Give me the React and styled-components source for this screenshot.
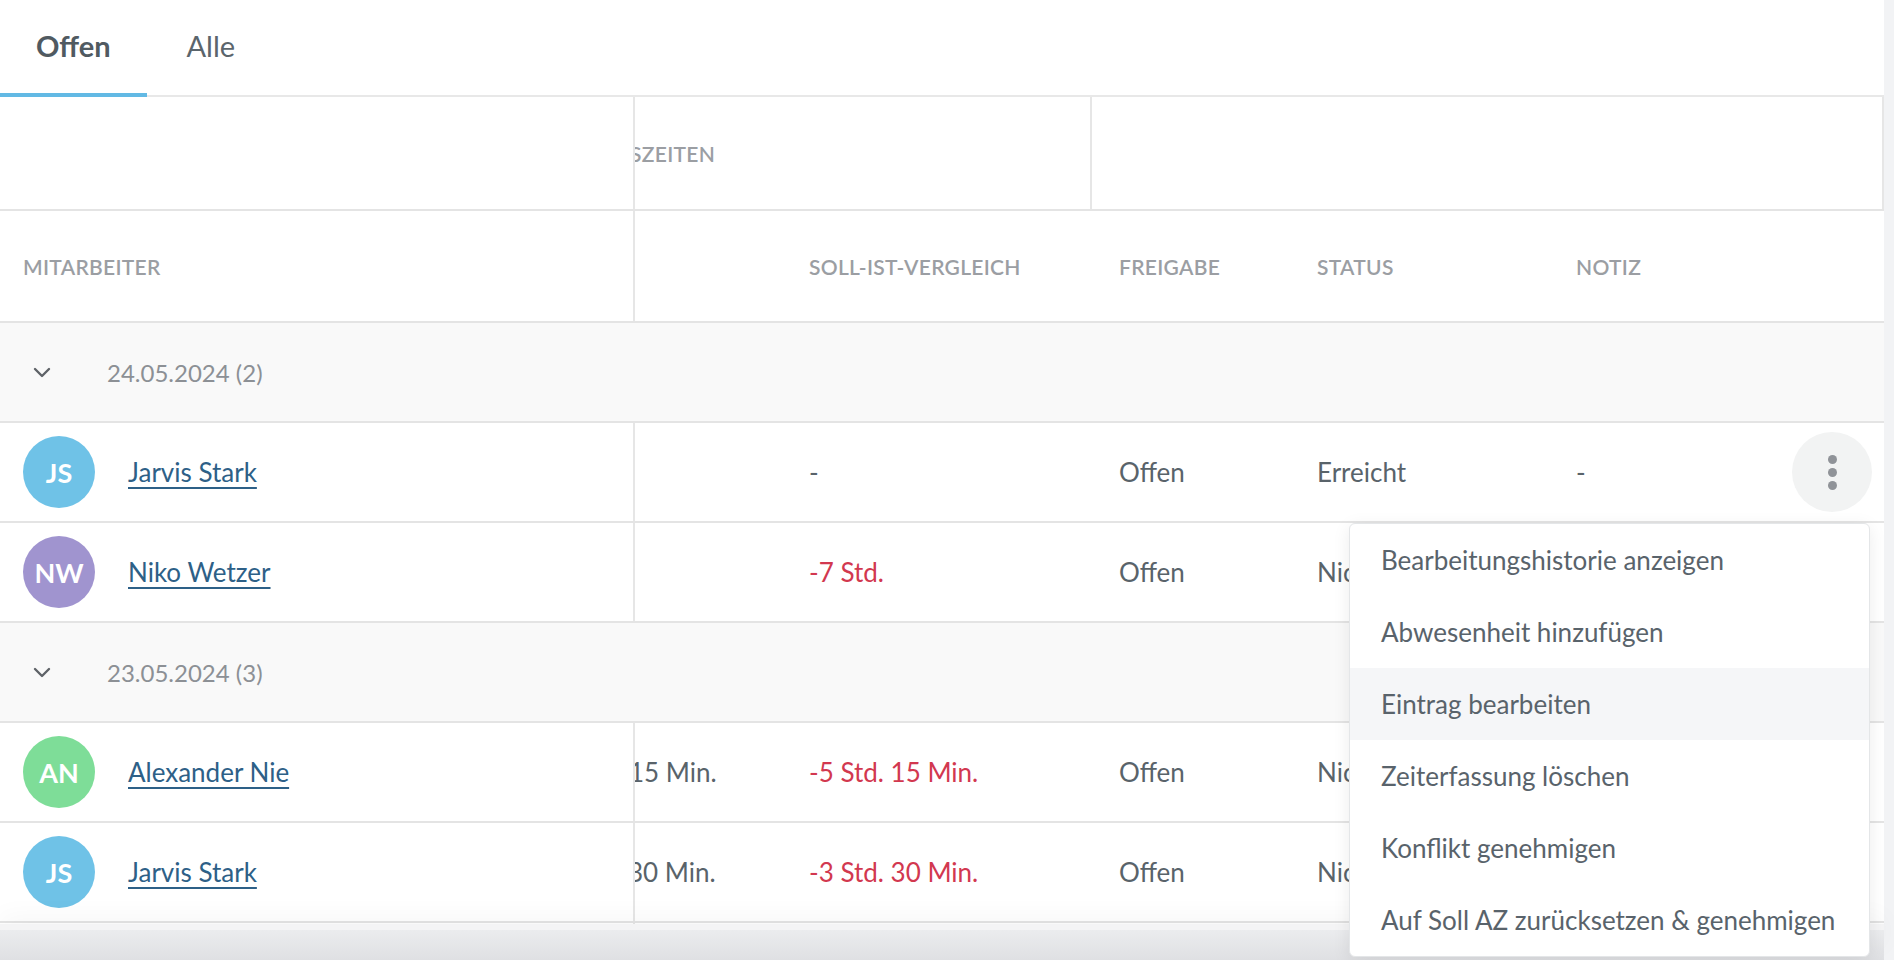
import React from 'react';
import styled, { createGlobalStyle, css } from 'styled-components';

const GlobalStyle = createGlobalStyle`
  html, body {
    margin: 0;
    padding: 0;
    height: 100%;
  }
  body {
    font-family: Lato, "Noto Sans", sans-serif;
    background: #ffffff;
    color: #59636a;
    overflow: hidden;
  }
  * {
    box-sizing: border-box;
  }
`;

const rows = [
  {
    date: '24.05.2024',
    entries: [
      { initials: 'JS', name: 'Jarvis Stark', color: '#6fc2e7', ist: '', diff: '-', negative: false, release: 'Offen', status: 'Erreicht', note: '-', hovered: true },
      { initials: 'NW', name: 'Niko Wetzer', color: '#a094cf', ist: '', diff: '-7 Std.', negative: true, release: 'Offen', status: 'Nicht erreicht', note: '-' },
    ],
  },
  {
    date: '23.05.2024',
    count: 3,
    entries: [
      { initials: 'AN', name: 'Alexander Nie', color: '#7edd98', ist: '15 Min.', shift: 6, diff: '-5 Std. 15 Min.', negative: true, release: 'Offen', status: 'Nicht erreicht', note: '-' },
      { initials: 'JS', name: 'Jarvis Stark', color: '#6fc2e7', ist: '30 Min.', shift: 7, diff: '-3 Std. 30 Min.', negative: true, release: 'Offen', status: 'Nicht erreicht', note: '-' },
      { initials: 'NW', name: 'Niko Wetzer', color: '#a094cf', ist: '45 Min.', shift: 7, diff: '-6 Std. 45 Min.', negative: true, release: 'Offen', status: 'Nicht erreicht', note: '-' },
    ],
  },
];

const menuItems = [
  'Bearbeitungshistorie anzeigen',
  'Abwesenheit hinzufügen',
  'Eintrag bearbeiten',
  'Zeiterfassung löschen',
  'Konflikt genehmigen',
  'Auf Soll AZ zurücksetzen & genehmigen',
];

// column widths of the horizontally scrolled part
const COL = { ist: 174, soll: 310, release: 198, status: 259, actions: 92, timesGroup: 455 };

const Chevron = () => (
  <svg width="18" height="11" viewBox="0 0 18 11" fill="none">
    <polyline points="2,2 9,9 16,2" stroke="#5f6368" strokeWidth="2.4" strokeLinecap="round" strokeLinejoin="round" />
  </svg>
);

const App = () => {
  return (
    <Page>
      <GlobalStyle />
      <Main>
        <TabBar>
          <Tab $active>Offen</Tab>
          <Tab>Alle</Tab>
        </TabBar>

        <Viewport>
          <Row $h={114}>
            <StickyCell />
            <Scroller>
              <GroupHead $w={COL.timesGroup}>
                <HeadLabel>
                  <Clip $shift={5}>SZEITEN</Clip>
                </HeadLabel>
              </GroupHead>
              <GroupHead $last />
            </Scroller>
          </Row>

          <Row $h={112}>
            <StickyCell>
              <HeadLabel>Mitarbeiter</HeadLabel>
            </StickyCell>
            <Scroller>
              <Cell $w={COL.ist} />
              <Cell $w={COL.soll}><HeadLabel>Soll-Ist-Vergleich</HeadLabel></Cell>
              <Cell $w={COL.release}><HeadLabel>Freigabe</HeadLabel></Cell>
              <Cell $w={COL.status}><HeadLabel>Status</HeadLabel></Cell>
              <Cell $grow><HeadLabel>Notiz</HeadLabel></Cell>
            </Scroller>
          </Row>

          {rows.map((group) => (
            <React.Fragment key={group.date}>
              <Row $h={100} $group>
                <GroupLabel>
                  <Chevron />
                  <DateText>
                    {group.date} ({group.count || group.entries.length})
                  </DateText>
                </GroupLabel>
              </Row>
              {group.entries.map((e, i) => (
                <Row $h={100} key={group.date + i}>
                  <StickyCell>
                    <Avatar $color={e.color}>{e.initials}</Avatar>
                    <NameLink href="#">{e.name}</NameLink>
                  </StickyCell>
                  <Scroller>
                    <Cell $w={COL.ist}>{e.ist && <Clip $shift={e.shift}>{e.ist}</Clip>}</Cell>
                    <Cell $w={COL.soll} $red={e.negative}>{e.diff}</Cell>
                    <Cell $w={COL.release}>{e.release}</Cell>
                    <Cell $w={COL.status}>{e.status}</Cell>
                    <Cell $grow>{e.note}</Cell>
                    <ActionCell>
                      {e.hovered && (
                        <Kebab aria-label="Aktionen">
                          <Dot />
                          <Dot />
                          <Dot />
                        </Kebab>
                      )}
                    </ActionCell>
                  </Scroller>
                </Row>
              ))}
            </React.Fragment>
          ))}
        </Viewport>

        <HScrollbar />
      </Main>
      <VScrollbar />

      <Menu>
        {menuItems.map((item) => (
          <MenuItem key={item} $active={item === 'Eintrag bearbeiten'}>
            {item}
          </MenuItem>
        ))}
      </Menu>
    </Page>
  );
};

const Page = styled.div`
  position: relative;
  display: flex;
  height: 100vh;
  overflow: hidden;
`;

const Main = styled.div`
  flex: 1;
  min-width: 0;
  display: flex;
  flex-direction: column;
`;

const VScrollbar = styled.div`
  width: 10px;
  flex-shrink: 0;
  background: #f2f3f5;
`;

const HScrollbar = styled.div`
  position: relative;
  height: 30px;
  flex-shrink: 0;
  background: linear-gradient(#ebecee, #dfe0e3);
  box-shadow: 0 -6px 0 #f4f4f5, 0 -14px 26px rgba(0, 0, 0, 0.035);
`;

const TabBar = styled.nav`
  display: flex;
  gap: 4px;
  height: 97px;
  flex-shrink: 0;
  border-bottom: 2px solid #e8e8e8;
`;

const Tab = styled.button`
  position: relative;
  padding: 0 36px 5px;
  border: 0;
  background: none;
  font-family: inherit;
  font-size: 29px;
  font-weight: ${(p) => (p.$active ? 700 : 400)};
  color: ${(p) => (p.$active ? '#505a61' : '#5b656c')};
  cursor: pointer;

  ${(p) =>
    p.$active &&
    css`
      &::after {
        content: '';
        position: absolute;
        left: 0;
        right: 0;
        bottom: -2px;
        height: 4px;
        background: #62b9e4;
      }
    `}
`;

const Viewport = styled.div`
  flex: 1;
  min-height: 0;
  overflow: hidden;
`;

const Row = styled.div`
  display: flex;
  height: ${(p) => p.$h}px;
  border-bottom: 2px solid #e4e4e4;
  background: ${(p) => (p.$group ? '#f9f9f9' : '#ffffff')};
`;

const StickyCell = styled.div`
  width: 635px;
  flex-shrink: 0;
  display: flex;
  align-items: center;
  gap: 33px;
  padding-left: 23px;
  border-right: 2px solid #e6e6e6;
`;

const Scroller = styled.div`
  flex: 1;
  min-width: 0;
  display: flex;
  overflow: hidden;
`;

const GroupHead = styled.div`
  display: flex;
  align-items: center;
  overflow: hidden;
  white-space: nowrap;
  ${(p) =>
    p.$last
      ? css`
          flex: 1;
          border-left: 2px solid #e6e6e6;
          border-right: 2px solid #e6e6e6;
        `
      : css`
          width: ${p.$w}px;
          flex-shrink: 0;
        `}
`;

const Cell = styled.div`
  display: flex;
  align-items: center;
  overflow: hidden;
  white-space: nowrap;
  font-size: 26px;
  color: ${(p) => (p.$red ? '#d2384f' : '#59636a')};
  ${(p) =>
    p.$grow
      ? css`
          flex: 1;
          min-width: 0;
        `
      : css`
          width: ${p.$w}px;
          flex-shrink: 0;
        `}
`;

const Clip = styled.span`
  margin-left: -${(p) => p.$shift || 0}px;
`;

const HeadLabel = styled.span`
  font-size: 21px;
  font-weight: 600;
  letter-spacing: 0.3px;
  text-transform: uppercase;
  color: #9b9ea3;
`;

const GroupLabel = styled.div`
  display: flex;
  align-items: center;
  gap: 56px;
  padding-left: 33px;
`;

const DateText = styled.span`
  font-size: 24px;
  color: #8c9095;
`;

const Avatar = styled.div`
  width: 72px;
  height: 72px;
  flex-shrink: 0;
  border-radius: 50%;
  display: flex;
  align-items: center;
  justify-content: center;
  background: ${(p) => p.$color};
  color: #ffffff;
  font-size: 27px;
  font-weight: 700;
`;

const NameLink = styled.a`
  font-size: 26px;
  color: #2d6087;
  text-decoration: underline;
  text-decoration-thickness: 2px;
  text-underline-offset: 5px;
`;

const ActionCell = styled.div`
  width: ${COL.actions}px;
  flex-shrink: 0;
  display: flex;
  align-items: center;
  padding-right: 12px;
`;

const Kebab = styled.button`
  width: 80px;
  height: 80px;
  border: 0;
  border-radius: 50%;
  background: #f2f3f3;
  display: flex;
  flex-direction: column;
  align-items: center;
  justify-content: center;
  gap: 4px;
  padding: 0;
  cursor: pointer;
`;

const Dot = styled.span`
  width: 9px;
  height: 9px;
  border-radius: 50%;
  background: #909398;
`;

const Menu = styled.ul`
  position: absolute;
  top: 523px;
  right: 24px;
  width: 521px;
  margin: 0;
  padding: 0;
  list-style: none;
  background: #ffffff;
  border: 1px solid #e4e6e8;
  border-radius: 6px;
  box-shadow: 0 4px 18px rgba(0, 0, 0, 0.08);
  overflow: hidden;
  z-index: 10;
`;

const MenuItem = styled.li`
  height: 72px;
  display: flex;
  align-items: center;
  padding: 0 31px;
  font-size: 26px;
  color: #59636b;
  white-space: nowrap;
  background: ${(p) => (p.$active ? '#f5f6f8' : 'transparent')};
`;

export default App;
